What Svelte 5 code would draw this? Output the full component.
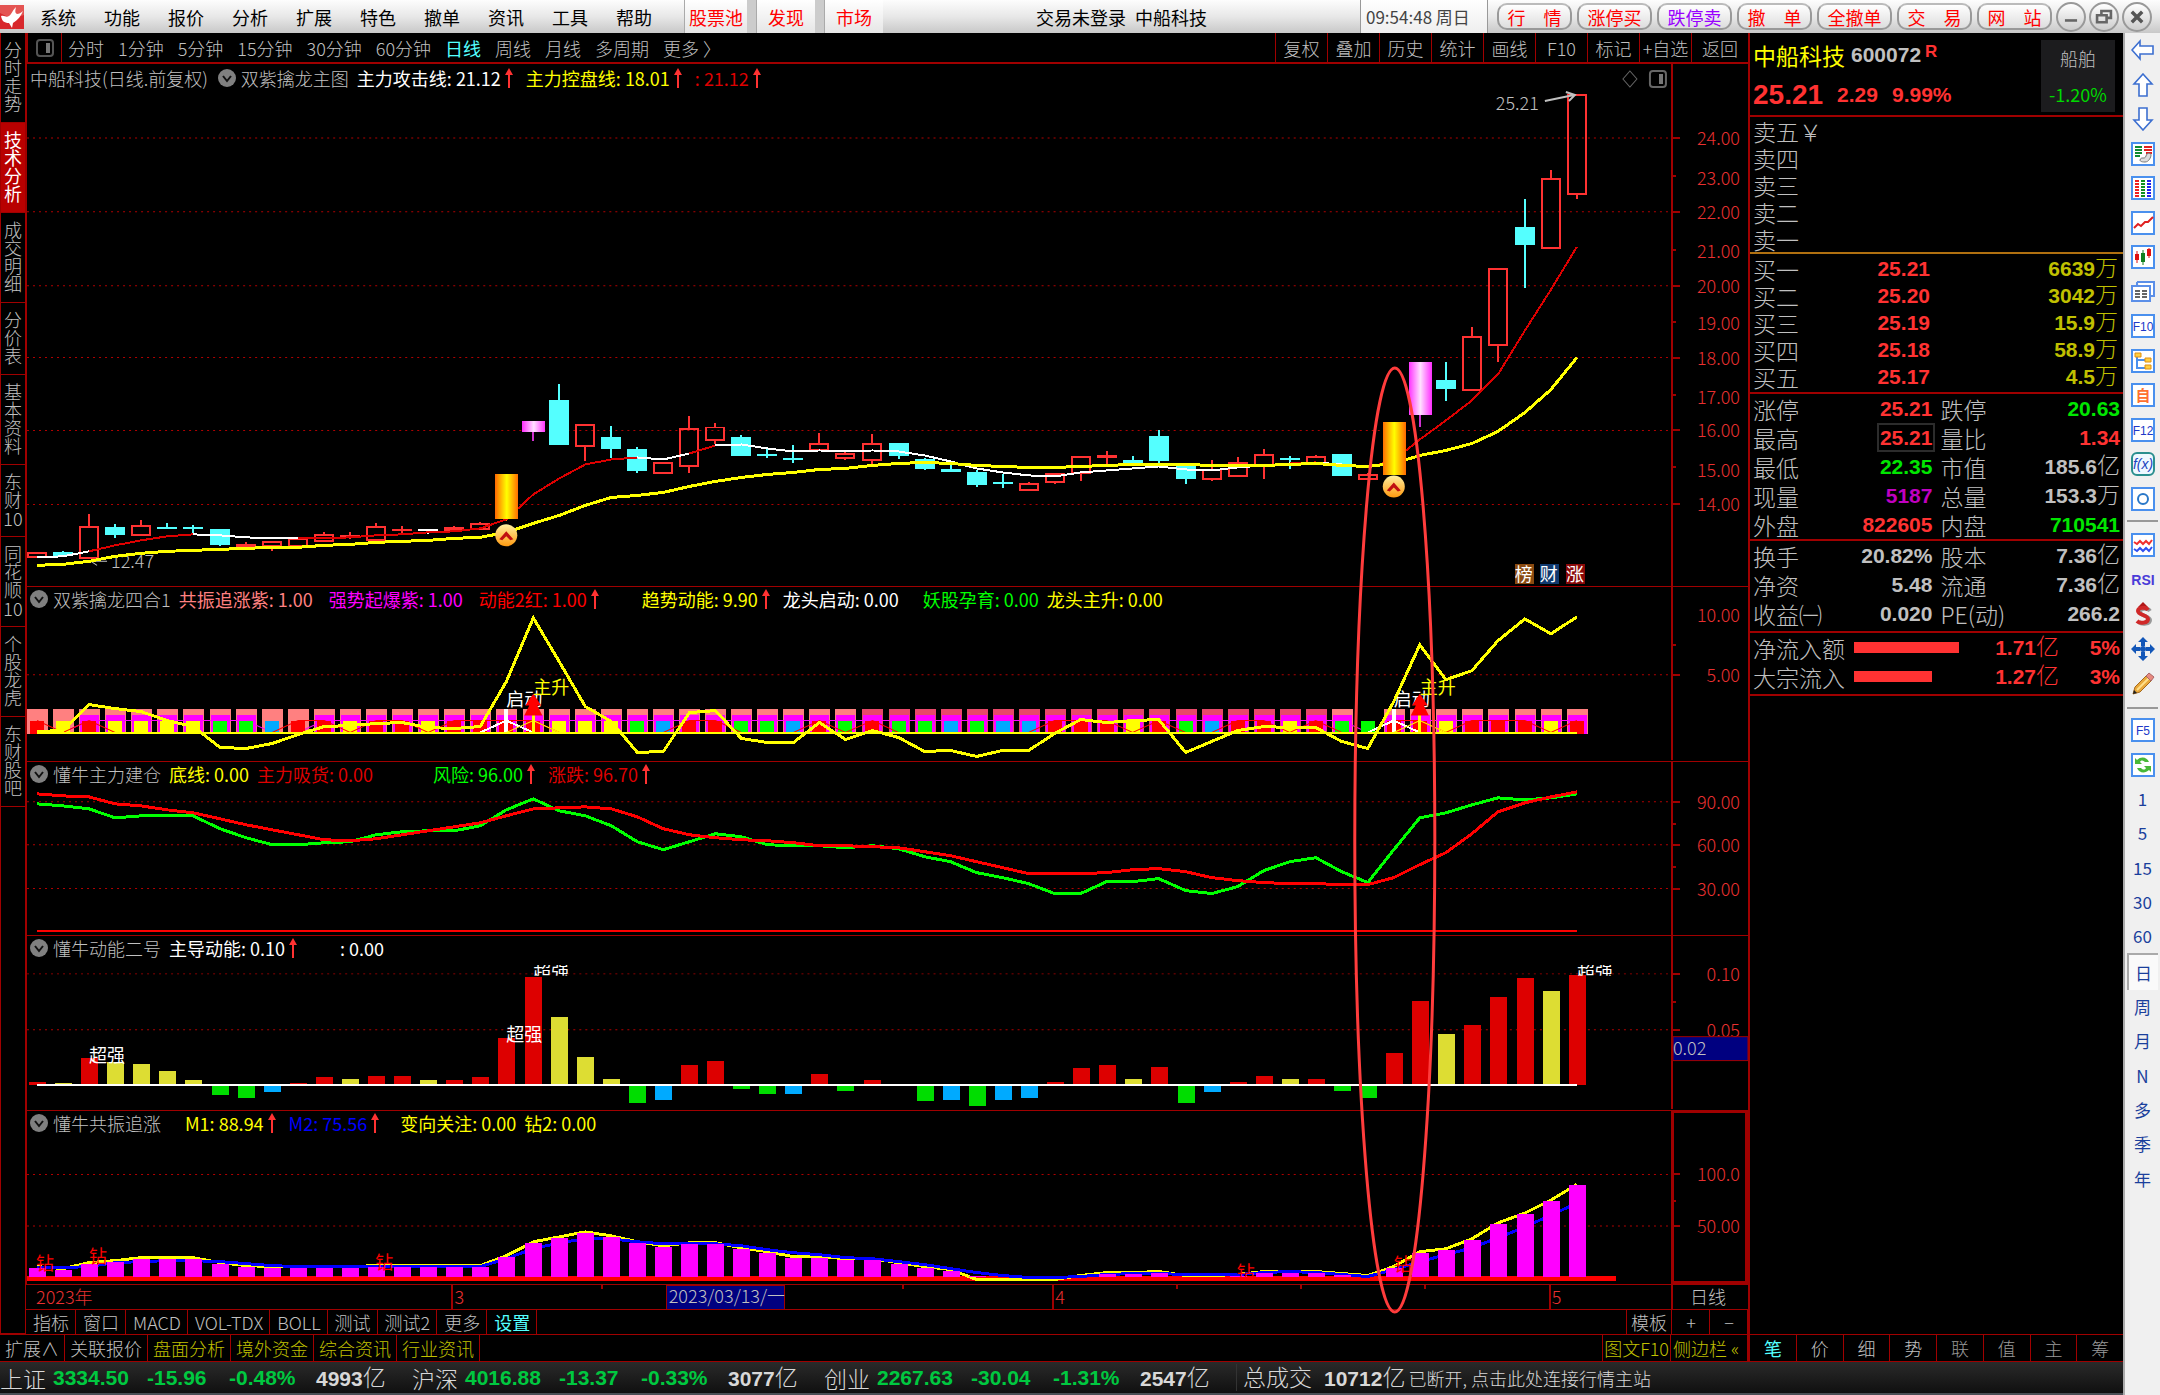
<script lang="ts">
  type Pane = {
    id: string
    top: number
    height: number
    title: string
    stock?: string
    items: { text: string; tone: string; up?: boolean; gap?: string }[]
    grid: number[]
    labels: [number, string][]
    ticks: number[]
  }

  const menus = ['系统', '功能', '报价', '分析', '扩展', '特色', '撤单', '资讯', '工具', '帮助']
  const hotTabs = ['股票池', '发现', '市场']
  const tradeButtons = ['行　情', '涨停买', '跌停卖', '撤　单', '全撤单', '交　易', '网　站']
  const periods = ['分时', '1分钟', '5分钟', '15分钟', '30分钟', '60分钟', '日线', '周线', '月线', '多周期', '更多 〉']
  const chartTools = ['复权', '叠加', '历史', '统计', '画线', 'F10', '标记', '+自选', '返回']
  const sideTabs = ['分时走势', '技术分析', '成交明细', '分价表', '基本资料', '东财10', '同花顺10', '个股龙虎', '东财股吧']
  const indicatorTabs = ['指标', '窗口', 'MACD', 'VOL-TDX', 'BOLL', '测试', '测试2', '更多', '设置']
  const linkTabs = ['扩展∧', '关联报价', '盘面分析', '境外资金', '综合资讯', '行业资讯']
  const quoteTabs = ['笔', '价', '细', '势', '联', '值', '主', '筹']

  const panes: Pane[] = [
    {
      id: 'main', top: 64, height: 523, title: '双紫擒龙主图', stock: '中船科技(日线.前复权)',
      items: [
        { text: '主力攻击线: 21.12', tone: 'white', up: true },
        { text: '主力控盘线: 18.01', tone: 'yellow', up: true },
        { text: ': 21.12', tone: 'dark-red', up: true },
      ],
      grid: [138, 212, 286, 358, 431, 505],
      labels: [[138, '24.00'], [178, '23.00'], [212, '22.00'], [251, '21.00'], [286, '20.00'], [323, '19.00'], [358, '18.00'], [397, '17.00'], [431, '16.00'], [471, '15.00'], [505, '14.00']],
      ticks: [176, 250, 322, 395, 468],
    },
    {
      id: 'four', top: 588, height: 174, title: '双紫擒龙四合1',
      items: [
        { text: '共振追涨紫: 1.00', tone: 'pink' },
        { text: '强势起爆紫: 1.00', tone: 'magenta', gap: 'mid' },
        { text: '动能2红: 1.00', tone: 'red', up: true, gap: 'mid' },
        { text: '趋势动能: 9.90', tone: 'yellow', up: true, gap: 'wide' },
        { text: '龙头启动: 0.00', tone: 'white' },
        { text: '妖股孕育: 0.00', tone: 'green', gap: 'roomy' },
        { text: '龙头主升: 0.00', tone: 'yellow' },
      ],
      grid: [676],
      labels: [[616, '10.00'], [676, '5.00']],
      ticks: [646],
    },
    {
      id: 'build', top: 762, height: 174, title: '懂牛主力建仓',
      items: [
        { text: '底线: 0.00', tone: 'yellow' },
        { text: '主力吸货: 0.00', tone: 'dark-red' },
        { text: '风险: 96.00', tone: 'green', up: true, gap: 'huge' },
        { text: '涨跌: 96.70', tone: 'dark-red', up: true },
      ],
      grid: [802, 845, 889],
      labels: [[802, '90.00'], [845, '60.00'], [889, '30.00']],
      ticks: [824, 867],
    },
    {
      id: 'energy', top: 936, height: 174, title: '懂牛动能二号',
      items: [
        { text: '主导动能: 0.10', tone: 'white', up: true },
        { text: ': 0.00', tone: 'white', gap: 'wide' },
      ],
      grid: [974, 1030],
      labels: [[974, '0.10'], [1030, '0.05']],
      ticks: [1002],
    },
    {
      id: 'chase', top: 1110, height: 175, title: '懂牛共振追涨',
      items: [
        { text: 'M1: 88.94', tone: 'yellow', up: true, gap: 'roomy' },
        { text: 'M2: 75.56', tone: 'blue', up: true },
        { text: '变向关注: 0.00', tone: 'yellow', gap: 'mid' },
        { text: '钻2: 0.00', tone: 'yellow' },
      ],
      grid: [1174, 1226],
      labels: [[1174, '100.0'], [1226, '50.00']],
      ticks: [1201],
    },
  ]

  // bar centres are evenly spaced over the plot
  const bx = (i: number) => Math.round(38 + 26.08 * i)
  const pts = (ys: number[], from = 0) => ys.map((y, i) => `${bx(i + from)},${y}`).join(' ')

  // kind, high, body top, body bottom, low
  const candles: [string, number, number, number, number][] = [
    ['r', 554, 554, 558, 558], ['c', 552, 553, 557, 558], ['r', 515, 528, 559, 559], ['c', 525, 528, 536, 539],
    ['r', 521, 527, 536, 536], ['c', 524, 528, 529, 530], ['c', 526, 528, 529, 535], ['c', 530, 530, 546, 547],
    ['f', 543, 545, 548, 548], ['r', 543, 543, 547, 552], ['r', 540, 540, 547, 547], ['r', 533, 536, 542, 542],
    ['f', 533, 536, 537, 540], ['r', 524, 528, 541, 543], ['f', 527, 530, 531, 534], ['w', 530, 530, 531, 535],
    ['f', 527, 528, 532, 533], ['r', 523, 525, 530, 530], ['o', 475, 475, 520, 522], ['m', 421, 421, 433, 442],
    ['c', 384, 400, 446, 446], ['r', 425, 425, 447, 462], ['c', 426, 438, 450, 459], ['c', 448, 450, 472, 474],
    ['r', 464, 464, 474, 474], ['r', 416, 430, 467, 474], ['r', 423, 428, 441, 445], ['c', 436, 438, 457, 457],
    ['c', 450, 455, 456, 459], ['c', 446, 459, 460, 464], ['r', 434, 445, 451, 451], ['r', 451, 455, 459, 461],
    ['r', 435, 445, 461, 465], ['c', 444, 444, 457, 460], ['c', 459, 460, 470, 471], ['c', 466, 470, 473, 473],
    ['c', 471, 473, 486, 488], ['c', 475, 483, 484, 489], ['r', 483, 485, 491, 491], ['r', 474, 475, 483, 485],
    ['r', 458, 458, 474, 482], ['f', 452, 456, 459, 466], ['c', 457, 461, 466, 466], ['c', 431, 437, 462, 464],
    ['c', 466, 467, 480, 485], ['r', 461, 471, 480, 482], ['r', 458, 464, 477, 477], ['r', 450, 456, 467, 480],
    ['c', 457, 459, 460, 470], ['r', 456, 458, 464, 465], ['c', 455, 455, 477, 477], ['r', 474, 476, 480, 481],
    ['o', 422, 422, 476, 476], ['m', 362, 362, 415, 427], ['c', 362, 380, 389, 401], ['r', 327, 337, 390, 390],
    ['r', 269, 269, 345, 362], ['c', 199, 227, 245, 288], ['r', 170, 179, 248, 248], ['r', 95, 95, 194, 199],
  ]
  const candleColor: Record<string, string> = {
    r: '#ff3232', f: '#ff3232', c: '#54ffff', w: '#ffffff', o: 'url(#gold)', m: 'url(#violet)',
  }

  const attack = [558, 557, 552, 546, 541, 537, 535, 536, 538, 539, 539, 539, 538, 536, 535, 533, 532, 529, 520, 495, 479, 465, 460, 458, 460, 454, 446, 445, 449, 452, 451, 452, 451, 452, 456, 462, 469, 473, 476, 477, 473, 471, 469, 467, 470, 471, 468, 466, 464, 463, 465, 468, 461, 440, 421, 401, 375, 331, 290, 247]
  const attackRuns = [[0, 2, '#fff'], [2, 6, '#d00'], [6, 10, '#fff'], [10, 23, '#d00'], [23, 25, '#fff'], [25, 26, '#d00'], [26, 48, '#fff'], [48, 49, '#d00'], [49, 51, '#fff'], [51, 59, '#d00']] as [number, number, string][]
  const control = [566, 565, 562, 557, 554, 552, 551, 550, 549, 548, 548, 546, 545, 543, 542, 541, 539, 538, 533, 524, 516, 506, 498, 496, 493, 487, 482, 478, 475, 473, 470, 469, 466, 464, 463, 464, 466, 467, 468, 468, 467, 466, 465, 465, 465, 466, 466, 466, 465, 464, 466, 467, 464, 456, 451, 444, 432, 413, 390, 358]

  const tones = 'ryryyyyggbrryrryrrrryyygbrrggbrgrggbgbbrrryrgbrryrggrryrrryr'.split('')
  const toneColor: Record<string, string> = { r: '#ff0000', y: '#ffff00', g: '#00ff00', b: '#00aaff' }
  const energyColor: Record<string, string> = { r: '#dd0000', y: '#dddd33', g: '#00dd00', b: '#00aaff' }
  const noMagenta = [0, 1, 9, 10, 51]
  const trend = [733, 732, 706, 710, 713, 722, 728, 749, 750, 745, 736, 728, 727, 725, 724, 729, 730, 728, 683, 619, 663, 708, 723, 754, 753, 714, 712, 740, 744, 744, 724, 741, 732, 739, 753, 752, 758, 752, 752, 735, 721, 724, 722, 721, 754, 743, 732, 728, 729, 729, 743, 750, 703, 646, 681, 672, 642, 620, 635, 618]

  const risk = [804, 806, 809, 818, 816, 816, 816, 829, 838, 845, 845, 843, 842, 835, 832, 831, 831, 826, 810, 799, 811, 816, 826, 842, 850, 842, 834, 837, 845, 846, 846, 848, 846, 849, 857, 862, 873, 878, 884, 894, 894, 882, 882, 879, 891, 894, 887, 871, 862, 858, 872, 883, 850, 818, 813, 805, 798, 800, 798, 794]
  const swing = [794, 796, 797, 804, 806, 810, 813, 819, 825, 830, 835, 840, 841, 839, 835, 831, 827, 823, 816, 809, 808, 807, 809, 817, 829, 835, 838, 840, 841, 843, 846, 846, 847, 848, 852, 856, 862, 868, 874, 874, 874, 873, 870, 869, 872, 878, 881, 883, 884, 884, 885, 885, 878, 865, 853, 834, 812, 803, 797, 792]

  const energy = [3, 2, 27, 23, 21, 14, 5, -11, -14, -8, 2, 8, 6, 9, 9, 5, 5, 8, 47, 108, 68, 28, 6, -19, -16, 20, 24, -5, -10, -10, 11, -7, 5, -2, -17, -16, -22, -16, -14, 3, 17, 20, 6, 18, -19, -8, 3, 9, 6, 6, -7, -14, 32, 84, 51, 60, 88, 107, 94, 110]

  const chase = [9, 7, 13, 15, 18, 18, 18, 13, 10, 9, 9, 9, 9, 10, 10, 10, 10, 10, 20, 34, 39, 44, 40, 34, 30, 33, 33, 28, 24, 19, 19, 17, 17, 13, 9, 6, 1, 0, 0, 0, 0, 3, 3, 4, 0, 0, 1, 4, 4, 4, 2, 0, 9, 24, 27, 37, 53, 63, 76, 92]
  const m1 = chase.map((h, i) => (i > 35 && i < 40 ? 1280 : 1276 - h))
  const m2 = [1268, 1268, 1267, 1263, 1262, 1261, 1261, 1262, 1264, 1266, 1267, 1267, 1267, 1267, 1267, 1267, 1267, 1267, 1259, 1249, 1243, 1239, 1239, 1242, 1244, 1244, 1244, 1246, 1250, 1253, 1255, 1258, 1259, 1262, 1265, 1269, 1273, 1276, 1278, 1278, 1277, 1275, 1274, 1274, 1275, 1275, 1275, 1273, 1272, 1273, 1275, 1277, 1270, 1262, 1255, 1248, 1238, 1227, 1215, 1203]

  const sells = ['卖五', '卖四', '卖三', '卖二', '卖一']
  const buys = [
    ['买一', '25.21', '6639', '万'],
    ['买二', '25.20', '3042', '万'],
    ['买三', '25.19', '15.9', '万'],
    ['买四', '25.18', '58.9', '万'],
    ['买五', '25.17', '4.5', '万'],
  ]
  const stats = [
    [
      ['涨停', '25.21', 'up', '跌停', '20.63', '', 'down'],
      ['最高', '25.21', 'up boxed', '量比', '1.34', '', 'up'],
      ['最低', '22.35', 'down', '市值', '185.6', '亿', ''],
      ['现量', '5187', 'purple', '总量', '153.3', '万', ''],
      ['外盘', '822605', 'up', '内盘', '710541', '', 'down'],
    ],
    [
      ['换手', '20.82%', '', '股本', '7.36', '亿', ''],
      ['净资', '5.48', '', '流通', '7.36', '亿', ''],
      ['收益㈠', '0.020', '', 'PE(动)', '266.2', '', ''],
    ],
  ]
  const flows = [
    { name: '净流入额', width: 105, value: '1.71', share: '5%' },
    { name: '大宗流入', width: 78, value: '1.27', share: '3%' },
  ]
  const indices = [
    ['上证', '3334.50', '-15.96', '-0.48%', '4993'],
    ['沪深', '4016.88', '-13.37', '-0.33%', '3077'],
    ['创业', '2267.63', '-30.04', '-1.31%', '2547'],
  ]

  const rail = [
    ['left', 'up', 'down', 'list', 'grid', 'line', 'candle', 'pages', 'F10', 'tree', 'self', 'F12', 'fx', 'ring'],
    ['waves', 'RSI', 'money', 'move', 'pencil'],
    ['F5', 'refresh', '1', '5', '15', '30', '60', '日', '周', '月', 'N', '多', '季', '年'],
  ]
  const plain = ['1', '5', '15', '30', '60', '日', '周', '月', 'N', '多', '季', '年']

  let period = $state('日线')
  let scale = $state('日')
  let side = $state(1)
</script>

{#snippet chevron()}
  <svg class="chevron" viewBox="0 0 18 18" aria-hidden="true">
    <circle cx="9" cy="9" r="9" fill="#808080" />
    <path d="M5 7l4 5 4-5" fill="none" stroke="#111" stroke-width="2" />
  </svg>
{/snippet}

{#snippet rise()}
  <svg class="rise" viewBox="0 0 8 20" aria-hidden="true">
    <path d="M4 0l4 7H0zM3 6h2v14H3z" fill="#ff3232" />
  </svg>
{/snippet}

{#snippet panelIcon()}
  <svg class="panel-icon" viewBox="0 0 18 18" aria-hidden="true">
    <rect x="1" y="1" width="16" height="16" rx="3" fill="none" stroke="#555" stroke-width="2" />
    <rect x="10" y="4" width="4" height="10" fill="#777" />
  </svg>
{/snippet}

{#snippet railIcon(name: string)}
  <svg viewBox="0 0 24 24" aria-hidden="true">
    {#if name === 'left'}
      <path d="M1 12L9 3v5h13v8H9v5z" fill="#fff" stroke="#3c6fd0" stroke-width="1.6" />
    {:else if name === 'up'}
      <path d="M12 1l9 10h-5v12H8V11H3z" fill="#fff" stroke="#3c6fd0" stroke-width="1.6" />
    {:else if name === 'down'}
      <path d="M12 23l9-10h-5V1H8v12H3z" fill="#fff" stroke="#3c6fd0" stroke-width="1.6" />
    {:else if name === 'move'}
      <path d="M12 0l5 5h-3v4h-4V5H7zM12 24l5-5h-3v-4h-4v4H7zM0 12l5-5v3h4v4H5v3zM24 12l-5-5v3h-4v4h4v3z" fill="#1256b8" />
      <circle cx="12" cy="12" r="3" fill="#1256b8" />
    {:else if name === 'pencil'}
      <path d="M2 22l2-7L16 3l5 5L9 20z" fill="#e9a83a" stroke="#a56a1c" />
      <path d="M6 18L18 6" stroke="#ffe08a" stroke-width="2" />
      <path d="M15 4l3-3 5 4-3 4z" fill="#e88a80" stroke="#a66" />
      <path d="M2 22l1-4 3 3z" fill="#222" />
    {:else if name === 'money'}
      <path d="M17 8C15 5 7 5 7 9s10 4 10 8-8 5-11 2" transform="translate(2 1)" fill="none" stroke="#999" stroke-width="4" />
      <path d="M12 0l5 5H7z" fill="#b01818" />
      <path d="M17 8C15 5 7 5 7 9s10 4 10 8-8 5-11 2" fill="none" stroke="#d02828" stroke-width="4" />
    {:else if name === 'RSI'}
      <text x="12" y="17" text-anchor="middle" font-size="14" font-weight="700" fill="#4a3cd8">RSI</text>
    {:else if name === 'pages'}
      <path d="M6 2h17v14h-4M6 2v4" fill="#fff" stroke="#5b8fe8" stroke-width="2" />
      <rect x="1" y="6" width="18" height="15" fill="#fff" stroke="#5b8fe8" stroke-width="2" />
      <path d="M4 11h5M11 11h5M4 14h5M11 14h5M4 17h5M11 17h5" stroke="#333" stroke-width="1.5" />
    {:else if name === 'fx'}
      <rect x="1" y="1" width="22" height="22" rx="5" fill="#eef8ff" stroke="#2a8f8f" stroke-width="2" />
      <text x="12" y="17" text-anchor="middle" font-size="14" font-style="italic" fill="#1a44c0">f(x)</text>
    {:else}
      <rect x="1" y="1" width="22" height="22" fill="#fff" stroke="#4a90ee" stroke-width="2" />
      {#if name === 'list'}
        <path d="M4 5h7M4 8h7M4 11h7M4 14h5" stroke="#108a30" stroke-width="2" />
        <path d="M13 5h8M13 8h8M15 11h6" stroke="#e02020" stroke-width="2" />
        <path d="M9 18c1-4 5 0 6-4s5-3 5-1-2 7-6 7-5-1-5-2z" fill="#ddd" stroke="#777" />
      {:else if name === 'grid'}
        <path d="M4 5h4M4 8h4M4 11h4M4 14h4M4 17h4M4 20h4" stroke="#f02020" stroke-width="2" />
        <path d="M10 5h4M10 8h4M10 11h4M10 14h4M10 17h4M10 20h4" stroke="#109020" stroke-width="2" />
        <path d="M16 5h4M16 8h4M16 11h4M16 14h4M16 17h4M16 20h4" stroke="#2020f0" stroke-width="2" />
      {:else if name === 'line'}
        <path d="M3 17l4-4 3 2 4-4h3l5-5" fill="none" stroke="#e02020" stroke-width="2" />
      {:else if name === 'candle'}
        <path d="M6 6v12M18 3v10" stroke="#e01010" /><path d="M12 5v15" stroke="#108020" />
        <path d="M4 9h4v6H4zM16 4h4v7h-4z" fill="#e01010" /><path d="M10 8h4v9h-4z" fill="#108020" />
      {:else if name === 'tree'}
        <path d="M6 8v11h8M6 11h8" fill="none" stroke="#4a90ee" stroke-width="2" />
        <path d="M4 4h6v4H4zM14 9h6v4h-6zM14 16h6v4h-6z" fill="#ffcf40" stroke="#e09010" />
      {:else if name === 'self'}
        <text x="12" y="18" text-anchor="middle" font-size="15" font-weight="700" fill="#ff7030">自</text>
      {:else if name === 'ring'}
        <circle cx="12" cy="12" r="5" fill="none" stroke="#2a78c8" stroke-width="2" />
      {:else if name === 'waves'}
        <path d="M3 9l3 2 3-3 3 3 3-3 3 3 3-4" fill="none" stroke="#f03030" stroke-width="2" />
        <path d="M3 16l3 2 3-3 3 3 3-3 3 3 3-4" fill="none" stroke="#3050f0" stroke-width="2" />
      {:else if name === 'refresh'}
        <path d="M4 5l2 2c4-4 10-3 12 2h-4c-2-2-4-2-5 0l2 2H4zM20 19l-2-2c-4 4-10 3-12-2h4c2 2 4 2 5 0l-2-2h7z" fill="#48b838" />
      {:else}
        <text x="12" y="17" text-anchor="middle" font-size="12" fill="#2038c8">{name}</text>
      {/if}
    {/if}
  </svg>
{/snippet}

<div class="app">
  <header class="topbar">
    <svg class="logo" viewBox="0 0 24 24" aria-hidden="true">
      <rect width="24" height="24" fill="#d8282c" />
      <path d="M0 0h24v10L12 14 0 8z" fill="#f08078" opacity=".5" />
      <path d="M1 11c4-1 5 2 8 0 3-2 3-5 7-9-1 4-1 6 1 7 2 0 4-1 6-3-2 5-5 9-10 12l-1 5-3-5c-5 0-7-2-8-7z" fill="#fff" />
    </svg>
    <nav class="menus">
      {#each menus as menu}<button>{menu}</button>{/each}
    </nav>
    <nav class="hot">
      {#each hotTabs as tab}<button>{tab}</button>{/each}
    </nav>
    <h1>交易未登录&ensp;中船科技</h1>
    <time>09:54:48 周日</time>
    <div class="trade">
      {#each tradeButtons as label, i}<button class:violet={i === 2}>{label}</button>{/each}
    </div>
    <div class="window">
      <button aria-label="最小化"><svg viewBox="0 0 30 30"><path d="M8 19h14" stroke="#666" stroke-width="3" /></svg></button>
      <button aria-label="还原"><svg viewBox="0 0 30 30"><path d="M12 12V8h11v8h-4M7 13h11v8H7z" fill="none" stroke="#666" stroke-width="3" /></svg></button>
      <button aria-label="关闭"><svg viewBox="0 0 30 30"><path d="M9 9l12 12M21 9L9 21" stroke="#555" stroke-width="4" /></svg></button>
    </div>
  </header>

  <div class="body">
    <div class="work">
      <div class="upper">
        <div class="left">
          <div class="desk">
            <nav class="side">
              {#each sideTabs as tab, i}
                <button class:active={side === i} onclick={() => (side = i)}>
                  <span class="upright">{tab.replace('10', '')}{#if tab.endsWith('10')}<span class="ten">10</span>{/if}</span>
                </button>
              {/each}
            </nav>

            <div class="center">
              <div class="periods">
                <button class="toggle" aria-label="侧栏">{@render panelIcon()}</button>
                {#each periods as p}
                  <button class:active={period === p} onclick={() => (period = p)}>{p}</button>
                {/each}
                <div class="tools">
                  {#each chartTools as tool}<button>{tool}</button>{/each}
                </div>
              </div>

              <div class="charts">
                {#each panes as pane}
                  <section class="pane" class:tall={pane.id === 'main'}>
                    <svg class="plot" viewBox="28 {pane.top} 1720 {pane.height}" preserveAspectRatio="none">
                      <defs>
                        <linearGradient id="gold">
                          <stop offset="0" stop-color="#ff6a00" /><stop offset=".3" stop-color="#ffc400" />
                          <stop offset=".5" stop-color="#ffff00" /><stop offset=".7" stop-color="#ffc400" />
                          <stop offset="1" stop-color="#ff6a00" />
                        </linearGradient>
                        <linearGradient id="violet">
                          <stop offset="0" stop-color="#ff30ff" /><stop offset=".5" stop-color="#ffe0ff" />
                          <stop offset="1" stop-color="#ff30ff" />
                        </linearGradient>
                        <linearGradient id="coin" x2="0" y2="1">
                          <stop offset="0" stop-color="#fff0a0" /><stop offset="1" stop-color="#ff9a10" />
                        </linearGradient>
                        <clipPath id="cut"><rect x="28" y="965" width="1644" height="11" /></clipPath>
                      </defs>

                      {#each pane.grid as y}
                        <path d="M28 {y}H1672" class="grid" />
                        <path d="M1672 {y}h8" class="axis" />
                      {/each}
                      {#each pane.ticks as y}<path d="M1672 {y}h4" class="axis" />{/each}
                      <path d="M1672 {pane.top}v{pane.height}" class="axis" />
                      {#each pane.labels as [y, label]}
                        <text x="1740" y={y + 7} text-anchor="end" class="scale">{label}</text>
                      {/each}

                      {#if pane.id === 'main'}
                        <text x="112" y="569" fill="#c0c0c0">12.47</text>
                        <path d="M108 562H92l6-4M92 562l6 4" fill="none" stroke="#c0c0c0" />
                        {#each candles as [kind, high, top, bottom, low], i}
                          {@const wide = kind === 'o' || kind === 'm'}
                          {@const wick = kind === 'm' ? '#d030d0' : kind === 'o' ? '#ff8000' : candleColor[kind]}
                          <path d="M{bx(i)} {high}V{top}M{bx(i)} {bottom}V{low}" stroke={wick} stroke-width="2" />
                          {#if kind === 'r'}
                            <rect x={bx(i) - 9} y={top} width="18" height={bottom - top} fill="none" stroke="#ff3232" stroke-width="2" />
                          {:else}
                            <rect x={bx(i) - (wide ? 11 : 10)} y={top} width={wide ? 23 : 20} height={Math.max(2, bottom - top)} fill={candleColor[kind]} />
                          {/if}
                        {/each}
                        {#each attackRuns as [a, b, color]}
                          <polyline points={pts(attack.slice(a, b + 1), a)} fill="none" stroke={color} stroke-width="2" />
                        {/each}
                        <polyline points={pts(control)} class="thick" stroke="#ffff00" />
                        {#each [18, 52] as i}
                          {@const c = candles[i]}
                          <rect x={bx(i) - 11} y={c[2]} width="23" height={c[3] - c[2]} fill="url(#gold)" />
                          <g class="smooth" transform="translate({bx(i)} {i === 18 ? 536 : 487})">
                            <circle r="11" fill="url(#coin)" />
                            <path d="M-7 4l7-8 7 8-3 1-4-4-4 4z" fill="#c01010" />
                          </g>
                        {/each}
                        <text x="1496" y="110" fill="#c0c0c0">25.21</text>
                        <path class="smooth" d="M1545 101l29-6M1566 92l9 3-6 6" fill="none" stroke="#c0c0c0" stroke-width="2" />
                        <path class="smooth" d="M1630 71l7 8-7 8-7-8z" fill="none" stroke="#666" stroke-width="1" />
                        <rect class="smooth" x="1650" y="71" width="16" height="16" rx="3" fill="none" stroke="#666" stroke-width="2" />
                        <rect x="1659" y="74" width="4" height="10" fill="#777" />
                        {#each [['榜', 1515, '#8a4a10'], ['财', 1540, '#103a70'], ['涨', 1566, '#8a0808']] as [label, x, fill]}
                          <rect {x} y="565" width="19" height="20" {fill} />
                          <text class="mark" x={Number(x) + 9} y="582" text-anchor="middle" fill="#fff">{label}</text>
                        {/each}
                      {:else if pane.id === 'four'}
                        {#each tones as tone, i}
                          {#if i !== 51}
                            <rect x={bx(i) - 10} y="710" width="21" height="25" fill={i > 31 && i < 50 ? '#e8486a' : '#ff8080'} />
                          {/if}
                          {#if !noMagenta.includes(i)}
                            <rect x={bx(i) - 9} y="716" width="19" height="19" fill="#ff00ff" />
                          {/if}
                        {/each}
                        <polyline points={pts(tones.map((t, i) => (noMagenta.includes(i) ? 734 : 722)))} fill="none" stroke="#ff00ff" />
                        {#each tones as tone, i}
                          <rect x={bx(i) - 7} y="722" width="14" height="13" fill={toneColor[tone]} />
                        {/each}
                        <polyline points={pts(tones.map((t) => (t === 'r' ? 722 : 734)))} fill="none" stroke="#ff0000" />
                        {#each [18, 52] as i}
                          <path d="M{bx(i)} 710V734" stroke="#fff" stroke-width="4" />
                          <path d="M{bx(i - 1)} 734L{bx(i)} 722L{bx(i + 1)} 734H{bx(i + 2)}" fill="none" stroke="#fff" stroke-width="2" />
                          <path d="M{bx(i)} 734L{bx(i + 1)} 722L{bx(i + 2)} 734" fill="none" stroke="#ffff00" />
                          <path d="M{bx(i + 1)} 716V734" stroke="#ffff00" stroke-width="3" />
                          <text class="mark" x={bx(i)} y="707" fill="#fff">启动</text>
                          <path class="smooth" d="M{bx(i + 1)} 695l8 12h-4l5 10h-18l5-10h-4z" fill="#ff0000" />
                          <text class="mark" x={bx(i + 1)} y="695" fill="#ffff00">主升</text>
                        {/each}
                        <path d="M38 734H1577" stroke="#ffff00" stroke-width="2" />
                        <polyline points={pts(trend)} class="thick" stroke="#ffff00" />
                      {:else if pane.id === 'build'}
                        <polyline points={pts(risk)} class="thick" stroke="#00ff00" />
                        <polyline points={pts(swing)} class="thick" stroke="#ff0000" />
                        <path d="M38 932H1577" stroke="#ff0000" stroke-width="2" />
                      {:else if pane.id === 'energy'}
                        {#each energy as h, i}
                          <rect x={bx(i) - 8} y={h > 0 ? 1085 - h : 1085} width="17" height={Math.abs(h)} fill={energyColor[tones[i]]} />
                        {/each}
                        <path d="M38 1085H1577" stroke="#fff" stroke-width="2" />
                        <text class="mark" x="90" y="1062" fill="#fff">超强</text>
                        <text class="mark" x="507" y="1041" fill="#fff">超强</text>
                        <g clip-path="url(#cut)">
                          <text class="mark" x="534" y="977" fill="#fff">超强</text>
                          <text class="mark" x="1577" y="977" fill="#fff">超强</text>
                        </g>
                        <rect x="1673" y="1037" width="75" height="24" fill="#000080" stroke="#a00000" />
                        <text x="1673" y="1055" fill="#c0c0c0">0.02</text>
                      {:else}
                        <path d="M28 1279H1616" stroke="#ff0000" stroke-width="5" />
                        <polyline points={pts(m1)} class="thick" stroke="#ffff00" />
                        <polyline points={pts(m2)} class="thick" stroke="#0000ff" />
                        {#each chase as h, i}
                          <rect x={bx(i) - 8} y={1277 - h} width="17" height={h} fill="#ff00ff" />
                        {/each}
                        {#each [[37, 1270], [90, 1263], [376, 1269], [1237, 1280], [1394, 1271]] as [x, y]}
                          <text class="mark" {x} {y} fill="#ff0000">钻</text>
                        {/each}
                        <rect x="1673" y="1111" width="74" height="172" fill="none" stroke="#a00000" stroke-width="3" />
                      {/if}
                    </svg>
                    <div class="legend">
                      {#if pane.stock}<span class="stock">{pane.stock}</span>{/if}
                      {@render chevron()}
                      <span>{pane.title}</span>
                      {#each pane.items as item}
                        <span class="item {item.tone} {item.gap ?? ''}">{item.text}{#if item.up}{@render rise()}{/if}</span>
                      {/each}
                    </div>
                  </section>
                {/each}

                <svg class="marker" viewBox="28 64 1720 1221" preserveAspectRatio="none" aria-hidden="true">
                  <ellipse cx="1395" cy="840" rx="40" ry="472" fill="none" stroke="#ff3c3c" stroke-width="3" />
                </svg>
              </div>

              <svg class="dates" viewBox="28 1285 1720 24" preserveAspectRatio="none">
                {#each [603, 904, 1178, 1302, 1425] as x}<path d="M{x} 1285v4" class="axis" />{/each}
                {#each [454, 1054, 1550, 1672] as x}<path d="M{x} 1285v24" class="axis" />{/each}
                <text x="38" y="1304" class="scale">2023年</text>
                <text x="456" y="1304" class="scale">3</text>
                <text x="1056" y="1304" class="scale">4</text>
                <text x="1552" y="1304" class="scale">5</text>
                <rect x="668" y="1285" width="118" height="24" fill="#000080" stroke="#a00000" />
                <text x="670" y="1303" fill="#c0c0c0">2023/03/13/一</text>
                <text x="1708" y="1304" text-anchor="middle" fill="#c0c0c0">日线</text>
              </svg>

              <div class="strip indicators">
                {#each indicatorTabs as tab}<button class:active={tab === '设置'}>{tab}</button>{/each}
                <button class="push">模板</button>
                <button class="sign">+</button>
                <button class="sign">−</button>
              </div>
            </div>
          </div>

          <div class="strip links">
            {#each linkTabs as tab, i}<button class:olive={i > 1}>{tab}</button>{/each}
            <button class="push olive">图文F10</button>
            <button class="olive fold">侧边栏 «</button>
          </div>
        </div>

        <aside class="quote">
          <div class="head">
            <div>
              <p class="name"><b>中船科技</b> <span>600072</span><sup>R</sup></p>
              <p class="last"><strong>25.21</strong> <span>2.29</span> <span>9.99%</span></p>
            </div>
            <div class="sector"><span>船舶</span><em>-1.20%</em></div>
          </div>

          <table class="book sells">
            <tbody>
              {#each sells as name, i}
                <tr><th>{name}{i === 0 ? '￥' : ''}</th></tr>
              {/each}
            </tbody>
          </table>
          <table class="book buys">
            <tbody>
              {#each buys as [name, price, volume, unit]}
                <tr><th>{name}</th><td class="up">{price}</td><td class="volume">{volume}<i>{unit}</i></td></tr>
              {/each}
            </tbody>
          </table>
          {#each stats as group}
            <table class="stats" class:loose={group.length === 3}>
              <tbody>
                {#each group as [a, av, atone, b, bv, unit, btone]}
                  <tr>
                    <th>{a}</th><td class={atone}><span>{av}</span></td>
                    <th>{b}</th><td class={btone}>{bv}<i>{unit}</i></td>
                  </tr>
                {/each}
              </tbody>
            </table>
          {/each}
          <div class="flows">
            {#each flows as flow}
              <div class="flow">
                <span class="label">{flow.name}</span>
                <span class="track"><span class="bar" style="width: {flow.width}px"></span></span>
                <b>{flow.value}<i>亿</i></b>
                <b class="share">{flow.share}</b>
              </div>
            {/each}
          </div>
          <div class="quote-tabs">
            {#each quoteTabs as tab, i}<button class:active={i === 0} class:dim={i > 3}>{tab}</button>{/each}
          </div>
        </aside>
      </div>

      <footer class="status">
        {#each indices as [name, price, change, pct, amount]}
          <div class="index">
            <span>{name}</span><b>{price}</b><b>{change}</b><b>{pct}</b><span class="amount"><strong>{amount}</strong>亿</span>
          </div>
        {/each}
        <div class="total"><span>总成交</span><span class="amount"><strong>10712</strong>亿</span></div>
        <a href="#connect">已断开, 点击此处连接行情主站</a>
      </footer>
    </div>

    <nav class="rail">
      {#each rail as group}
        <div class="group" class:short={group.length < 10}>
          {#each group as name}
            {#if plain.includes(name)}
              <button class:active={scale === name} onclick={() => (scale = name)}>{name}</button>
            {:else}
              <button aria-label={name}>{@render railIcon(name)}</button>
            {/if}
          {/each}
        </div>
      {/each}
    </nav>
  </div>
</div>

<style>
  :global(body) {
    background: #000;
  }

  .app {
    --line: #a00000;
    display: flex;
    flex-direction: column;
    height: 100vh;
    min-height: 1300px;
    overflow: hidden;
    color: #c0c0c0;
    font: 18px/24px 'Noto Sans CJK SC', sans-serif;
    font-weight: 300;
    white-space: nowrap;
  }

  button {
    padding: 0;
    border: 0;
    background: none;
    color: inherit;
    font: inherit;
    cursor: pointer;
  }

  p,
  h1 {
    margin: 0;
  }

  i,
  em {
    font-style: normal;
  }

  /* top bar */
  .topbar {
    display: flex;
    align-items: center;
    flex: none;
    height: 33px;
    background: linear-gradient(#fdfdfd, #e8e8e8 50%, #c8c8c8);
    color: #000;
    font-weight: 400;
  }

  .logo {
    width: 24px;
    height: 24px;
    margin-right: 2px;
  }

  .menus {
    display: flex;
    margin-right: 18px;
  }

  .menus button {
    width: 64px;
  }

  .hot {
    display: flex;
    gap: 9px;
    align-self: stretch;
    background: #ccc;
  }

  .hot button {
    padding: 0 4px;
    min-width: 59px;
    border-left: 1px solid #aaa;
    background: linear-gradient(#fff, #e6e6e6);
    color: #f00;
  }

  h1 {
    flex: 1;
    font-size: 18px;
    font-weight: 400;
    text-align: center;
  }

  time {
    align-self: stretch;
    width: 121px;
    padding-left: 5px;
    border: solid #999;
    border-width: 0 1px;
    background: linear-gradient(#fff, #eee);
    color: #444;
    font-size: 17px;
    line-height: 33px;
  }

  .trade {
    display: flex;
    gap: 5px;
    margin-left: 9px;
  }

  .trade button {
    width: 75px;
    height: 27px;
    border: 2px solid #999;
    border-top-color: #bbb;
    border-radius: 10px;
    background: linear-gradient(#fff, #ddd);
    color: #f00;
    line-height: 22px;
  }

  .trade .violet {
    color: #90f;
  }

  .window {
    display: flex;
    gap: 3px;
    margin: 0 8px 0 4px;
  }

  .window button {
    width: 30px;
    height: 30px;
    box-sizing: border-box;
    border: 2px solid #999;
    border-radius: 50%;
    background: linear-gradient(#fff, #ccc);
  }

  .window svg {
    display: block;
  }

  /* frame */
  .body {
    display: flex;
    flex: 1;
    min-height: 0;
  }

  .work,
  .left,
  .center {
    display: flex;
    flex: 1;
    flex-direction: column;
    min-width: 0;
    min-height: 0;
  }

  .upper,
  .desk {
    display: flex;
    flex: 1;
    min-height: 0;
  }

  .side {
    display: flex;
    flex-direction: column;
    flex: none;
    width: 26px;
    border: solid var(--line);
    border-width: 0 1px 1px;
    box-sizing: border-box;
  }

  .side button {
    display: flex;
    justify-content: center;
    padding: 8px 0 9px;
    border-bottom: 1px solid var(--line);
  }

  .upright {
    writing-mode: vertical-rl;
    line-height: 24px;
  }

  .ten {
    text-combine-upright: all;
  }

  .side .active {
    background: #b80000;
    color: #fff;
    font-weight: 400;
  }

  .periods {
    display: flex;
    align-items: center;
    gap: 14px;
    flex: none;
    height: 31px;
    box-sizing: border-box;
    border: solid var(--line);
    border-width: 0 0 2px 2px;
    font-size: 18px;
  }

  .periods .active,
  .strip .active,
  .quote-tabs .active {
    color: #54ffff;
    font-weight: 400;
  }

  .toggle {
    display: flex;
    align-items: center;
    align-self: stretch;
    width: 34px;
    margin-right: -8px;
    border-right: 1px solid var(--line);
    justify-content: center;
  }

  .panel-icon {
    width: 18px;
    height: 18px;
  }

  .tools {
    display: flex;
    align-self: stretch;
    margin-left: auto;
  }

  .tools button {
    width: 52px;
    box-sizing: border-box;
    border-left: 1px solid var(--line);
  }

  .tools button:last-child {
    width: 57px;
  }

  /* charts */
  .charts {
    position: relative;
    z-index: 1;
    display: grid;
    flex: 1;
    grid-template-rows: minmax(0, 3fr) repeat(4, minmax(0, 1fr));
    min-height: 0;
    border-left: 1px solid var(--line);
  }

  .pane {
    position: relative;
    border-bottom: 1px solid var(--line);
    box-sizing: border-box;
  }

  .plot,
  .marker {
    position: absolute;
    inset: 0;
    width: 100%;
    height: 100%;
  }

  .plot {
    shape-rendering: crispEdges;
  }

  .marker {
    overflow: visible;
    pointer-events: none;
  }

  .smooth {
    shape-rendering: auto;
  }

  .thick {
    fill: none;
    stroke-width: 3;
  }

  .grid {
    stroke: #b00000;
    stroke-dasharray: 2 4;
  }

  .axis {
    stroke: #a00000;
    stroke-width: 2;
  }

  .scale {
    fill: #e83030;
  }

  .mark {
    font-weight: 400;
  }

  .legend {
    position: absolute;
    top: 0;
    left: 3px;
    display: flex;
    align-items: center;
    height: 24px;
  }

  .tall .legend {
    height: 28px;
  }

  .stock {
    margin-right: 10px;
  }

  .chevron {
    width: 18px;
    height: 18px;
    margin-right: 5px;
  }

  .item {
    display: flex;
    align-items: center;
    margin-left: 8px;
    font-weight: 400;
  }

  .item.mid {
    margin-left: 16px;
  }

  .item.roomy {
    margin-left: 24px;
  }

  .item.wide {
    margin-left: 38px;
  }

  .item.huge {
    margin-left: 60px;
  }

  .rise {
    width: 8px;
    height: 20px;
    margin: 0 5px 0 4px;
  }

  .white {
    color: #fff;
  }

  .yellow {
    color: #ff0;
  }

  .red {
    color: #f00;
  }

  .dark-red {
    color: #d00;
  }

  .pink {
    color: #ff8080;
  }

  .magenta {
    color: #f0f;
  }

  .green {
    color: #0f0;
  }

  .blue {
    color: #00f;
  }

  .dates {
    flex: none;
    width: 100%;
    height: 24px;
    overflow: visible;
    shape-rendering: crispEdges;
  }

  .strip {
    display: flex;
    flex: none;
    height: 25px;
    border-top: 1px solid var(--line);
    box-sizing: border-box;
  }

  .strip button {
    padding: 0 5px;
    border-right: 1px solid var(--line);
  }

  .indicators button {
    padding: 0 6px 0 7px;
  }

  .strip .push {
    margin-left: auto;
    padding: 0 4px;
    border-left: 1px solid var(--line);
  }

  .strip .sign {
    width: 38px;
    box-sizing: border-box;
  }

  .links {
    height: 28px;
    border-bottom: 1px solid var(--line);
  }

  .links .olive {
    color: #c0c000;
  }

  .links .push {
    padding: 0 1px;
  }

  .links .fold {
    width: 77px;
    box-sizing: border-box;
    padding: 0 0 0 2px;
    text-align: left;
  }

  /* quote panel */
  .quote {
    display: flex;
    flex-direction: column;
    flex: none;
    width: 375px;
    box-sizing: border-box;
    border-left: 2px solid var(--line);
    font-size: 23px;
  }

  .head {
    display: flex;
    justify-content: space-between;
    height: 84px;
    padding-left: 3px;
    border-bottom: 2px solid var(--line);
    box-sizing: border-box;
  }

  .name,
  .last {
    display: flex;
    align-items: center;
    height: 40px;
    font-size: 23px;
  }

  .name {
    gap: 6px;
    padding-top: 2px;
  }

  .name b {
    color: #ff0;
    font-weight: 400;
  }

  .name span {
    font: 700 21px 'Liberation Sans', sans-serif;
  }

  .name sup {
    align-self: flex-start;
    margin-left: -2px;
    color: #ff3232;
    font: 700 17px/34px 'Liberation Sans', sans-serif;
  }

  .last {
    gap: 14px;
    color: #ff3232;
    font: 700 21px 'Liberation Sans', sans-serif;
  }

  .last strong {
    font-size: 28px;
  }

  .sector {
    display: flex;
    flex-direction: column;
    justify-content: space-around;
    align-items: center;
    width: 74px;
    height: 72px;
    margin: 7px 8px 0 0;
    background: #1c1c1e;
    font-size: 18px;
  }

  .sector em {
    color: #00d800;
    font-weight: 400;
  }

  table {
    width: 100%;
    border-spacing: 0;
    border-bottom: 2px solid var(--line);
  }

  .sells {
    border-bottom-color: #b07010;
  }

  .buys {
    padding: 1px 0 2px;
  }

  .loose {
    padding-bottom: 3px;
  }

  tr {
    height: 27px;
  }

  .stats tr {
    height: 29px;
  }

  th,
  td {
    padding: 0;
    line-height: 26px;
  }

  th {
    padding-left: 3px;
    font-weight: 300;
    text-align: left;
  }

  td {
    font: 700 21px/26px 'Liberation Sans', 'Noto Sans CJK SC', sans-serif;
    text-align: right;
  }

  td i,
  .flow i {
    font: 300 23px/20px 'Noto Sans CJK SC', sans-serif;
  }

  .book th {
    width: 80px;
  }

  .book td {
    width: 97px;
  }

  .book .volume {
    width: auto;
    padding-right: 5px;
    color: #c0c000;
  }

  .stats th {
    width: 80px;
  }

  .stats td {
    width: 99px;
  }

  .stats td + th {
    padding-left: 8px;
  }

  .stats td:last-child {
    padding-right: 3px;
  }

  .up {
    color: #ff3232;
  }

  .down {
    color: #00e600;
  }

  .purple {
    color: #c000c0;
  }

  .boxed span {
    outline: 2px solid #2c2c2c;
    outline-offset: 1px;
  }

  .flows {
    padding-bottom: 3px;
    border-bottom: 2px solid var(--line);
  }

  .flow {
    display: flex;
    align-items: center;
    height: 29px;
    padding: 0 3px;
    color: #ff3232;
  }

  .label {
    width: 101px;
    color: #c0c0c0;
  }

  .track {
    flex: 1;
  }

  .bar {
    display: block;
    height: 11px;
    background: #ff3232;
  }

  .flow b {
    font: 700 21px 'Liberation Sans', sans-serif;
  }

  .flow .share {
    width: 61px;
    text-align: right;
  }

  .quote-tabs {
    display: flex;
    height: 28px;
    margin-top: auto;
    border: solid var(--line);
    border-width: 1px 0;
    box-sizing: border-box;
    font-size: 18px;
  }

  .quote-tabs button {
    flex: 1;
    border-right: 1px solid var(--line);
  }

  .quote-tabs button:last-child {
    border-right: 0;
  }

  .quote-tabs .dim {
    color: #999;
  }

  /* status bar */
  .status {
    display: flex;
    align-items: center;
    flex: none;
    height: 33px;
    box-sizing: border-box;
    border-bottom: 2px solid #4a4f55;
    background: linear-gradient(#2a2a2a, #101010);
    color: #d8d8d8;
    font-size: 23px;
  }

  .index {
    display: grid;
    grid-template-columns: 53px 94px 82px 87px 96px;
    align-items: center;
  }

  .index b,
  .amount strong {
    font: 700 21px 'Liberation Sans', sans-serif;
  }

  .index b {
    color: #00c840;
  }

  .total {
    display: flex;
    gap: 12px;
    padding-left: 6px;
    border-left: 1px solid #333;
  }

  .status a {
    padding-left: 3px;
    color: inherit;
    font-size: 18px;
    text-decoration: none;
  }

  /* icon rail */
  .rail {
    flex: none;
    width: 37px;
    box-sizing: border-box;
    border-left: 2px solid #aaa;
    background: #f0f0f0;
    color: #1a3f9c;
    font-size: 17px;
    font-weight: 400;
  }

  .group {
    display: grid;
    height: 483px;
    margin: 0 2px;
  }

  .group.short {
    height: 173px;
    padding: 6px 0;
    margin-top: 4px;
    margin-bottom: 4px;
    border: solid #999;
    border-width: 2px 0;
  }

  .rail button {
    display: flex;
    align-items: center;
    justify-content: center;
  }

  .rail button svg {
    width: 24px;
    height: 24px;
    font-family: 'Liberation Sans', 'Noto Sans CJK SC', sans-serif;
  }

  .rail .active {
    border: solid #aaa;
    border-width: 2px 0 0 2px;
    background: #fafafa;
  }
</style>
